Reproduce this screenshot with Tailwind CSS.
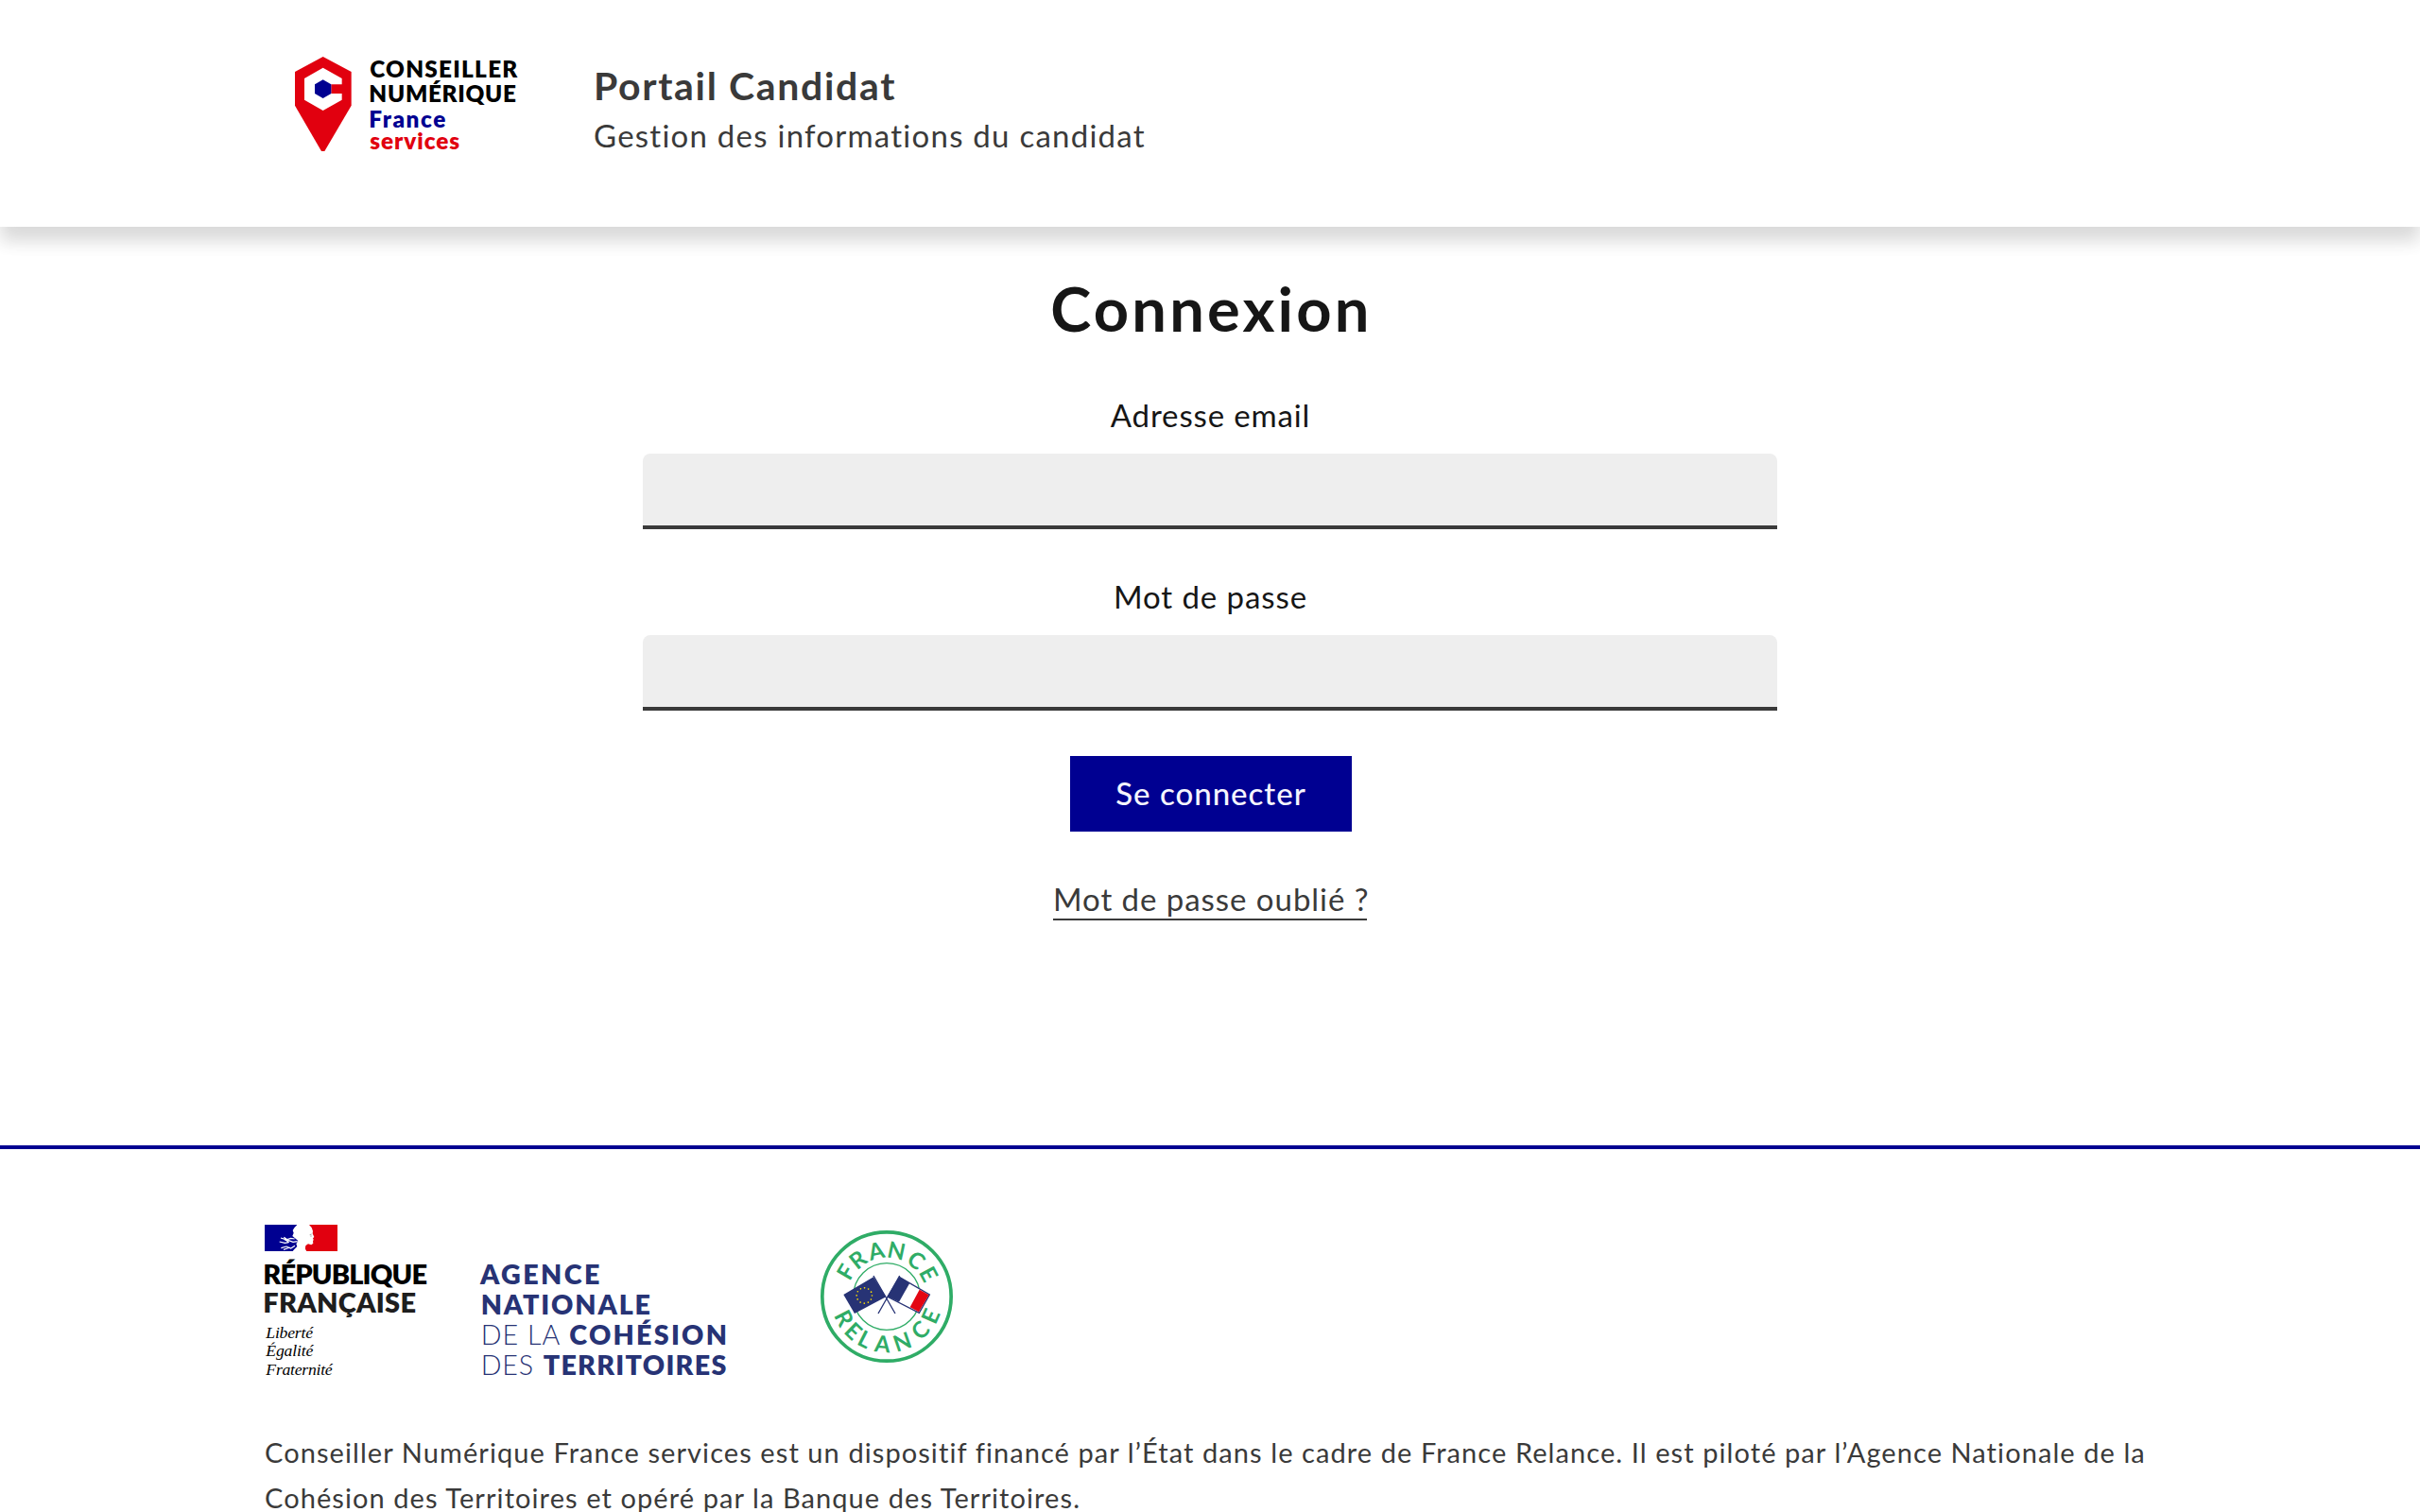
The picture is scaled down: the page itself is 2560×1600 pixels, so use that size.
<!DOCTYPE html>
<html lang="fr">
<head>
<meta charset="utf-8">
<title>Portail Candidat - Connexion</title>
<script src="https://cdn.jsdelivr.net/npm/@tailwindcss/browser@4"></script>
</head>
<body class="bg-white font-['Lato',sans-serif] text-[#3a3a3a]">
<div class="flex h-screen flex-col overflow-hidden">
  <header class="relative flex h-[240px] shrink-0 bg-white pl-[290px] shadow-[0_16px_16px_0_rgba(0,0,0,0.1),0_12px_24px_0_rgba(0,0,0,0.06)]">
    <svg class="mt-10 h-[140px] w-[300px]" viewBox="0 0 900 420" font-family="Lato, sans-serif" font-weight="800" font-size="73">
      <path fill="#e1000f" d="M155 60 245 108V215L160 360H150L66 215V108Z"/>
      <path fill="#fff" d="M155 95 215 129V148H181V177H215V197L155 231 96 197V129Z"/>
      <path fill="#000091" d="M155 133 181 148V177L155 192 129 177V148Z"/>
      <text x="304" y="125" textLength="468" fill="#000">CONSEILLER</text>
      <text x="301" y="203" textLength="467" fill="#000">NUMÉRIQUE</text>
      <text x="301" y="284" textLength="243" fill="#000091">France</text>
      <text x="304" y="355" textLength="284" fill="#e1000f">services</text>
    </svg>
    <div class="ml-[38px] pt-[63px]">
      <p class="text-[41px] leading-[56px] font-bold tracking-[1.65px]">Portail Candidat</p>
      <p class="text-[33px] leading-[48px] tracking-[1.24px]">Gestion des informations du candidat</p>
    </div>
  </header>

  <main class="flex shrink-0 flex-col items-center pt-[46px] text-[33px] text-[#161616]">
    <h1 class="pl-[3px] text-[65px] leading-[80px] font-bold tracking-[3.2px]">Connexion</h1>
    <form class="flex w-[1200px] flex-col items-center">
      <label for="email" class="mt-[49px] pl-px leading-[48px] tracking-[0.86px]">Adresse email</label>
      <input id="email" type="email" class="mt-[17px] h-20 w-full rounded-t-lg bg-[#eee] px-8 shadow-[inset_0_-4px_0_0_#3a3a3a]">
      <label for="password" class="mt-[47px] pl-px leading-[48px] tracking-[0.91px]">Mot de passe</label>
      <input id="password" type="password" class="mt-[17px] h-20 w-full rounded-t-lg bg-[#eee] px-8 shadow-[inset_0_-4px_0_0_#3a3a3a]">
      <button type="button" class="mt-12 ml-0.5 h-20 w-[298px] bg-[#000091] font-medium tracking-[1px] text-[#f5f5fe]">Se connecter</button>
      <a class="mt-[46px] h-12 w-[332px] border-b-2 border-[#3a3a3a] text-center leading-[50px] whitespace-nowrap tracking-[0.95px] text-[#3a3a3a]">Mot de passe oublié ?</a>
    </form>
  </main>

  <footer class="mt-[238px] shrink-0 border-t-4 border-[#000091] px-[280px] pt-20">
    <div class="flex items-start">
      <svg class="h-[164px] w-[180px] overflow-visible" viewBox="60 48 540 492">
        <!-- Marianne flag -->
        <path fill="#000091" d="M60 48H168V132H60Z"/>
        <path fill="#e1000f" d="M195 48H291V132H188Z"/>
        <path fill="#fff" d="M163 48 154 58 149 66 152 74 148 84 158 92 166 99 160 109 163 117 154 126 149 132H193L188 124 190 114 198 109 208 112 214 107 213 101 215 95 213 91 217 87 212 76 213 68 209 57 201 48Z"/>
        <path fill="none" stroke="#fff" stroke-width="3.500" d="M111 90 124 94 137 104M121 88 136 98 150 103 164 101M124 97 143 91 155 93M107 102 124 106 136 104M112 122 129 117 143 123 156 115M120 127 140 120"/>
        <path fill="none" stroke="#777" stroke-width="2" d="M203 80 209 78M205 84H209"/>
        <g font-family="Lato, sans-serif" font-weight="800" font-size="87">
          <text x="55" y="236" textLength="521" fill="#000">RÉPUBLIQUE</text>
          <text x="55" y="327" textLength="485" fill="#1e1e1e">FRANÇAISE</text>
        </g>
        <g font-family="'Liberation Serif', serif" font-style="italic" font-size="53" fill="#000">
          <text x="64" y="407" textLength="149">Liberté</text>
          <text x="64" y="466" textLength="150">Égalité</text>
          <text x="64" y="524" textLength="211">Fraternité</text>
        </g>
      </svg>
      <svg class="mt-10 ml-12 h-[122px] w-[262px] overflow-visible" viewBox="84 78 786 366" font-family="Lato, sans-serif" font-weight="800" font-size="86" fill="#273375">
        <text x="84" y="146" textLength="379">AGENCE</text>
        <text x="86" y="242" textLength="538">NATIONALE</text>
        <text x="86" y="338" textLength="251" font-weight="300">DE LA</text>
        <text x="367" y="338" textLength="500">COHÉSION</text>
        <text x="86" y="435" textLength="166" font-weight="300">DES</text>
        <text x="284" y="435" textLength="581">TERRITOIRES</text>
      </svg>
      <svg class="mt-1.5 ml-[98px] size-[140px]" viewBox="54 36 420 420">
        <g fill="none" stroke="#2fac66">
          <circle cx="264" cy="246" r="204.500" stroke-width="11"/>
          <circle cx="264" cy="246" r="106" stroke-width="4"/>
        </g>
        <g transform="translate(264 246)" font-family="Lato, sans-serif" font-weight="700" font-size="72" fill="#2fac66" text-anchor="middle">
          <text transform="rotate(-59) translate(0 -125)">F</text>
          <text transform="rotate(-38) translate(0 -123)">R</text>
          <text transform="rotate(-13) translate(0 -123)">A</text>
          <text transform="rotate(12) translate(0 -123)">N</text>
          <text transform="rotate(39) translate(0 -123)">C</text>
          <text transform="rotate(62) translate(0 -125)">E</text>
          <text transform="rotate(63) translate(0 178)">R</text>
          <text transform="rotate(44) translate(0 178)">E</text>
          <text transform="rotate(27) translate(0 178)">L</text>
          <text transform="rotate(5) translate(0 177)">A</text>
          <text transform="rotate(-19) translate(0 178)">N</text>
          <text transform="rotate(-45) translate(0 177)">C</text>
          <text transform="rotate(-66) translate(0 178)">E</text>
        </g>
        <!-- European flag -->
        <path fill="#273375" d="M127 240 222 184 262 247 162 300Z"/>
        <circle cx="193" cy="243" r="24.500" fill="none" stroke="#ffe100" stroke-width="5" stroke-linecap="round" stroke-dasharray="0 12.828"/>
        <!-- French flag -->
        <path fill="#fff" stroke="#273375" stroke-width="4" d="M305 185 400 240 367 298 267 247Z"/>
        <path fill="#273375" d="M305 184 337 203 303 263 267 247Z"/>
        <path fill="#e30613" d="M368 224 398 241 366 295 338 280Z"/>
        <path fill="none" stroke="#273375" stroke-width="4" d="M222 180 291 300M305 180 237 300"/>
      </svg>
    </div>
    <p class="mt-[53px] text-[29px] leading-[48px] tracking-[1.08px]">Conseiller Numérique France services est un dispositif financé par l’État dans le cadre de France Relance. Il est piloté par l’Agence Nationale de la Cohésion des Territoires et opéré par la Banque des Territoires.</p>
  </footer>
</div>
</body>
</html>
